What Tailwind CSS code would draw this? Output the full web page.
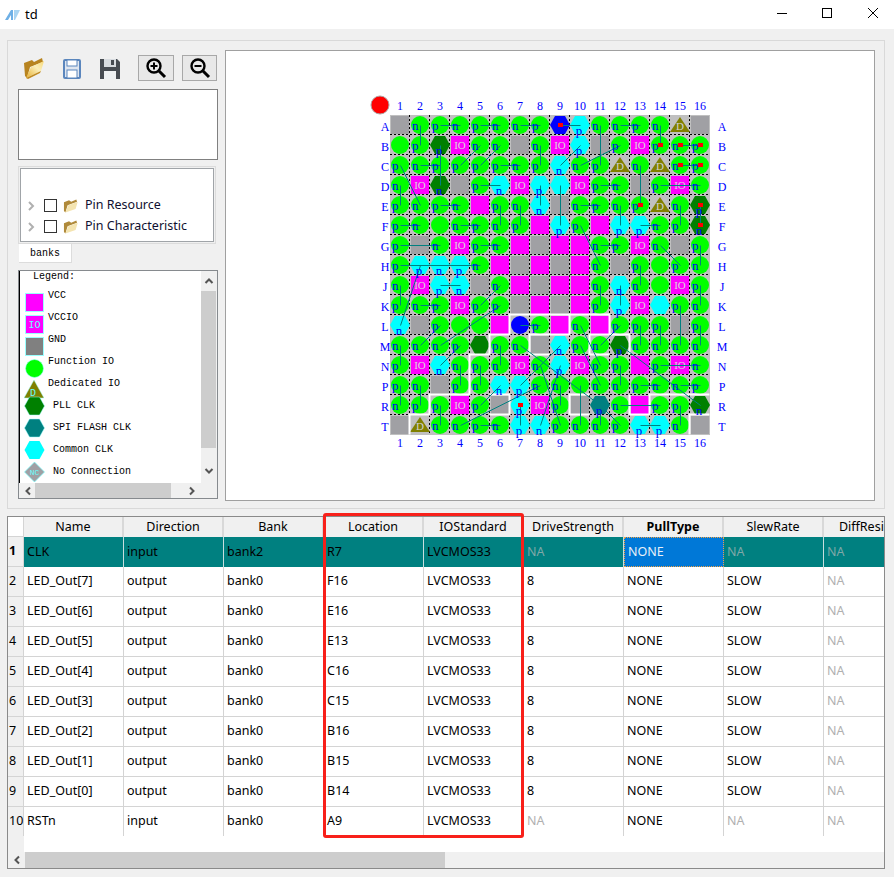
<!DOCTYPE html>
<html><head><meta charset="utf-8">
<title>td</title>
<script src="https://cdn.jsdelivr.net/npm/@tailwindcss/browser@4"></script>
</head>
<body class="bg-[#f0f0f0] font-['Noto_Sans',sans-serif] text-black overflow-hidden">
<div class="relative w-[894px] h-[877px] flex flex-col">

  <!-- title bar -->
  <div class="h-[29px] bg-white flex items-center shrink-0">
    <svg class="ml-[4px]" width="17" height="10" viewBox="0 0 17 10"><path d="M1 10 L7 0 L9 0 L9 10 L7 10 L7 5 L4 10Z" fill="#6fb0e6"/><path d="M10 0 L16 0 L11 10 L10 10Z" fill="#a9d4f2"/></svg>
    <span class="ml-[4px] text-[13px] leading-none">td</span>
    <div class="ml-auto flex items-center">
      <svg width="46" height="29"><path d="M21 13.500 H31" stroke="#000" stroke-width="1"/></svg>
      <svg width="46" height="29"><rect x="20.500" y="8.500" width="9" height="9" fill="none" stroke="#000"/></svg>
      <svg width="46" height="29"><path d="M20 8 L30 18 M30 8 L20 18" stroke="#000"/></svg>
    </div>
  </div>

  <!-- top group -->
  <div class="mt-[11px] mx-[7px] h-[469px] w-[878px] border border-[#d9d9d9] flex shrink-0">
    <div class="w-[217px] shrink-0 pl-[10px] flex flex-col">
      <!-- toolbar -->
      <div class="h-[48px] flex items-end pb-[8px]">
        <svg class="ml-[5px] mb-[2px]" width="22" height="22" viewBox="0 0 22 22">
          <defs><linearGradient id="fold" x1="0" y1="1" x2="1" y2="0"><stop offset="0" stop-color="#e8b030"/><stop offset=".6" stop-color="#fbeeb8"/><stop offset="1" stop-color="#f6d878"/></linearGradient></defs>
          <path d="M1 6 L9 3 L11 5 L19 1 L20 5 L7 10 L4 21 L2 19Z" fill="#b88420"/><path d="M3 21 L8 10 L21 4 L18 14 Z" fill="url(#fold)"/><path d="M3 21 L18 14 L17 16 L5 22Z" fill="#c08a20"/>
        </svg>
        <svg class="ml-[18px] mb-[2px]" width="18" height="20" viewBox="0 0 18 20"><rect x="1" y="1" width="16" height="18" rx="1" fill="#dfe6f0" stroke="#5b86bd" stroke-width="2"/><rect x="4" y="1" width="10" height="6" fill="#fff" stroke="#5b86bd"/><rect x="4" y="11" width="10" height="8" fill="#fff" stroke="#5b86bd"/></svg>
        <svg class="ml-[19px] mb-[2px]" width="21" height="21" viewBox="0 0 21 21"><path d="M0 1 H17 L20 4 V21 H0Z" fill="#474c52"/><rect x="4" y="1" width="12" height="8" fill="#d8dce0"/><rect x="11" y="2" width="3" height="5" fill="#474c52"/><rect x="4" y="13" width="12" height="8" fill="#eef0f2"/></svg>
        <div class="ml-[17px] w-[36px] h-[26px] bg-[#e8e8e8] border border-[#a8a8a8] flex items-center justify-center">
          <svg width="22" height="22" viewBox="0 0 22 22" fill="none" stroke="#000" stroke-width="2.400"><circle cx="9" cy="9" r="6.500"/><path d="M14 14 L20 20" stroke-width="3"/><path d="M5.500 9 H12.500 M9 5.500 V12.500" stroke-width="2"/></svg>
        </div>
        <div class="ml-[8px] w-[35px] h-[26px] bg-[#e8e8e8] border border-[#a8a8a8] flex items-center justify-center">
          <svg width="22" height="22" viewBox="0 0 22 22" fill="none" stroke="#000" stroke-width="2.400"><circle cx="9" cy="9" r="6.500"/><path d="M14 14 L20 20" stroke-width="3"/><path d="M5.500 9 H12.500" stroke-width="2"/></svg>
        </div>
      </div>
      <!-- empty box -->
      <div class="w-[200px] h-[71px] bg-white border border-[#808080] shrink-0"></div>
      <!-- tree -->
      <div class="mt-[6px] w-[198px] h-[78px] border border-[#dcdcdc] p-px shrink-0">
        <div class="h-full border border-[#a0a4a8] bg-white pt-[26px] text-[12.5px] text-[#101030]">
          <div class="h-[21px] flex items-center">
            <svg class="ml-[6px]" width="8" height="10" viewBox="0 0 8 10" fill="none" stroke="#b0b0b0" stroke-width="2"><path d="M2 1 L6 5 L2 9"/></svg>
            <span class="ml-[9px] w-[13px] h-[13px] border border-[#333] bg-white"></span>
            <svg class="ml-[5px]" width="17" height="16" viewBox="0 0 22 22"><path d="M2 6 L9 3 L12 5 L19 2 L20 5 L7 10 L4 20 L2 18Z" fill="#b08a3a"/><path d="M4 20 L8 10 L21 5 L18 15Z" fill="#f4e4b0"/></svg>
            <span class="ml-[6px]">Pin Resource</span>
          </div>
          <div class="h-[21px] flex items-center">
            <svg class="ml-[6px]" width="8" height="10" viewBox="0 0 8 10" fill="none" stroke="#b0b0b0" stroke-width="2"><path d="M2 1 L6 5 L2 9"/></svg>
            <span class="ml-[9px] w-[13px] h-[13px] border border-[#333] bg-white"></span>
            <svg class="ml-[5px]" width="17" height="16" viewBox="0 0 22 22"><path d="M2 6 L9 3 L12 5 L19 2 L20 5 L7 10 L4 20 L2 18Z" fill="#b08a3a"/><path d="M4 20 L8 10 L21 5 L18 15Z" fill="#f4e4b0"/></svg>
            <span class="ml-[6px]">Pin Characteristic</span>
          </div>
        </div>
      </div>
      <!-- tab -->
      <div class="ml-px w-[53px] h-[19px] bg-white border-b border-r border-[#dcdcdc] font-['Liberation_Mono',monospace] text-[10px] flex items-center justify-center shrink-0">banks</div>
      <!-- legend -->
      <div class="mt-[7px] w-[200px] h-[229px] border border-[#868a8e] bg-[#f0f0f0] flex flex-col shrink-0">
        <div class="flex h-[213px]">
          <div class="w-[182px] bg-white border-l border-black font-['Liberation_Mono',monospace] text-[10px] leading-[12px] overflow-hidden pl-[4px]">
            <div class="h-[19px] pl-[9px]">Legend:</div>
            <div class="h-[22px] flex items-start"><svg width="20" height="22" viewBox="0 0 20 22" class="mt-[1px]"><rect x="1.500" y="2.500" width="18" height="18" fill="#f0f" stroke="#9ff"/></svg><span class="ml-[4px]">VCC</span></div>
            <div class="h-[22px] flex items-start"><svg width="20" height="22" viewBox="0 0 20 22" class="mt-[1px]"><rect x="1.500" y="2.500" width="18" height="18" fill="#f0f" stroke="#9ff"/><text x="10.500" y="15" fill="#6ff" font-size="10" text-anchor="middle" font-family="Liberation Mono">IO</text></svg><span class="ml-[4px]">VCCIO</span></div>
            <div class="h-[22px] flex items-start"><svg width="20" height="22" viewBox="0 0 20 22" class="mt-[1px]"><rect x="1.500" y="2.500" width="18" height="18" fill="#808080" stroke="#9ff"/></svg><span class="ml-[4px]">GND</span></div>
            <div class="h-[22px] flex items-start"><svg width="20" height="22" viewBox="0 0 20 22" class="mt-[1px]"><circle cx="10.500" cy="11.500" r="9" fill="#0f0" stroke="#9ff" stroke-width=".6"/></svg><span class="ml-[4px]">Function IO</span></div>
            <div class="h-[17px] flex items-start"><svg width="20" height="22" viewBox="0 0 20 22" class="mt-[-1px] shrink-0"><path d="M10 3 L20 21 H0Z" fill="#808000" stroke="#9ff" stroke-width=".5"/><text x="9" y="19" fill="#6ff" font-size="10" text-anchor="middle" font-family="Liberation Mono">D</text></svg><span class="ml-[4px]">Dedicated IO</span></div>
            <div class="h-[22px] flex items-center"><svg width="21" height="20" viewBox="0 0 21 20"><path d="M0.500 10 L5.500 1 H15.500 L20.500 10 L15.500 19 H5.500Z" fill="#008000" stroke="#9ff" stroke-width=".5"/></svg><span class="ml-[8px]">PLL CLK</span></div>
            <div class="h-[22px] flex items-center"><svg width="21" height="20" viewBox="0 0 21 20"><path d="M0.500 10 L5.500 1 H15.500 L20.500 10 L15.500 19 H5.500Z" fill="#008080" stroke="#9ff" stroke-width=".5"/></svg><span class="ml-[8px]">SPI FLASH CLK</span></div>
            <div class="h-[22px] flex items-center"><svg width="21" height="20" viewBox="0 0 21 20"><path d="M0.500 10 L5.500 1 H15.500 L20.500 10 L15.500 19 H5.500Z" fill="#0ff"/></svg><span class="ml-[8px]">Common CLK</span></div>
            <div class="h-[22px] flex items-center"><svg width="21" height="22" viewBox="0 0 21 22"><path d="M10.500 1 L20.500 11 L10.500 21 L0.500 11Z" fill="#a0a0a4" stroke="#7ff" stroke-width=".7"/><text x="10.500" y="14" fill="#6ff" font-size="8" text-anchor="middle" font-family="Liberation Mono">NC</text></svg><span class="ml-[8px]">No Connection</span></div>
          </div>
          <!-- vertical scrollbar -->
          <div class="w-[16px] flex flex-col items-start">
            <svg class="mt-[6px] ml-[3px]" width="10" height="8" viewBox="0 0 10 8" fill="none" stroke="#555" stroke-width="2"><path d="M1.500 6 L5 2.500 L8.500 6"/></svg>
            <div class="mt-[6px] w-[15px] h-[157px] bg-[#cdcdcd]"></div>
            <svg class="mt-[19px] ml-[3px]" width="10" height="8" viewBox="0 0 10 8" fill="none" stroke="#555" stroke-width="2"><path d="M1.500 2 L5 5.500 L8.500 2"/></svg>
          </div>
        </div>
        <!-- horizontal scrollbar -->
        <div class="h-[15px] flex items-center">
          <svg class="ml-[5px]" width="8" height="10" viewBox="0 0 8 10" fill="none" stroke="#555" stroke-width="2"><path d="M6 1.500 L2.500 5 L6 8.500"/></svg>
          <div class="ml-[3px] w-[136px] h-[15px] bg-[#cdcdcd]"></div>
          <svg class="ml-[17px]" width="8" height="10" viewBox="0 0 8 10" fill="none" stroke="#555" stroke-width="2"><path d="M2 1.500 L5.500 5 L2 8.500"/></svg>
        </div>
      </div>
    </div>

    <!-- package view -->
    <div class="mt-[9px] w-[650px] h-[451px] bg-white border border-[#a0a0a0] shrink-0">
      <svg id="chip" width="648" height="449"></svg>
    </div>
  </div>

  <!-- pin table -->
  <div class="mt-[7px] mx-[7px] w-[878px] h-[353px] border border-[#8a8a8a] bg-white flex flex-col overflow-hidden shrink-0">
    <div id="pinTable" class="h-[319px] overflow-hidden text-[12.5px]"></div>
    <div class="w-[16px] h-[16px] bg-[#f0f0f0]"></div>
    <div class="h-[16px] bg-[#f0f0f0] flex items-center">
      <svg class="ml-[5px]" width="8" height="10" viewBox="0 0 8 10" fill="none" stroke="#555" stroke-width="2"><path d="M6 1.500 L2.500 5 L6 8.500"/></svg>
      <div class="ml-[4px] w-[420px] h-[16px] bg-[#cdcdcd]"></div>
    </div>
  </div>

  <!-- red highlight drawn over the table -->
  <div class="absolute left-[323px] top-[513px] w-[201px] h-[325px] border-[3px] border-[#f8201a] rounded-[3px]"></div>
</div>

<script>
  // pin table
  const headers = ['Name', 'Direction', 'Bank', 'Location', 'IOStandard', 'DriveStrength', 'PullType', 'SlewRate', 'DiffResistor'];
  const pins = [
    ['CLK', 'input', 'bank2', 'R7', 'NA'],
    ['LED_Out[7]', 'output', 'bank0', 'F16', '8'],
    ['LED_Out[6]', 'output', 'bank0', 'E16', '8'],
    ['LED_Out[5]', 'output', 'bank0', 'E13', '8'],
    ['LED_Out[4]', 'output', 'bank0', 'C16', '8'],
    ['LED_Out[3]', 'output', 'bank0', 'C15', '8'],
    ['LED_Out[2]', 'output', 'bank0', 'B16', '8'],
    ['LED_Out[1]', 'output', 'bank0', 'B15', '8'],
    ['LED_Out[0]', 'output', 'bank0', 'B14', '8'],
    ['RSTn', 'input', 'bank0', 'A9', 'NA'],
  ];
  let html = '<div class="flex h-[20px] bg-[#f0f0f0]"><div class="w-[16px] shrink-0 border-r border-b border-[#d4d4d4] bg-white"></div>';
  headers.forEach((h) => {
    const bold = h === 'PullType' ? ' font-bold' : '';
    html += `<div class="w-[100px] shrink-0 border-r-2 border-[#d8d8d8] flex items-center justify-center whitespace-nowrap overflow-hidden${bold}">${h}</div>`;
  });
  html += '</div>';
  pins.forEach((p, i) => {
    const sel = i === 0;
    const rowCls = sel ? 'bg-[#008080]' : 'bg-white';
    const line = sel ? 'border-r border-[#c8dede]' : 'border-r border-b border-[#d4d4d4]';
    const cells = [p[0], p[1], p[2], p[3], 'LVCMOS33', p[4], 'NONE', p[4] === 'NA' ? 'NA' : 'SLOW', 'NA'];
    html += `<div class="flex h-[30px] ${rowCls}">`;
    html += `<div class="w-[16px] shrink-0 bg-[#f0f0f0] border-r border-b border-[#d4d4d4] flex items-center pl-[1px] ${sel ? 'font-bold' : ''}">${i + 1}</div>`;
    cells.forEach((c, j) => {
      let cls = `w-[100px] shrink-0 flex items-center pl-[3px] ${line}`;
      if (c === 'NA') cls += sel ? ' text-[#7fa8a8]' : ' text-[#b0b0b0]';
      if (sel && j === 6) cls = 'w-[100px] shrink-0 flex items-center pl-[3px] bg-[#0078d7] text-[#e8f0f8] border border-dotted border-[#f0a040]';
      html += `<div class="${cls}">${c}</div>`;
    });
    html += '</div>';
  });
  document.getElementById('pinTable').innerHTML = html;

  // package view, page coords minus the svg origin
  const OX = -226, OY = -51;
  const rowNames = 'ABCDEFGHJKLMNPRT'.split('');
  const grid = [
    'G fn fp fn fp fn fn fp bo* cp fn fn fp fn D G',
    'fo fp hp I fn fn G fn I cp G fp I fp* fn* fp*',
    'fp fn fp fp fp fp fn fp cn fn fp D fn D fn* fp*',
    'fn I hn G fp cn I cp co I fp fn G fp I fn',
    'fp fn fp fn V fp fn cn G fn fp fn fp* D fn hp*',
    'fp fn fo fn fp fn fp V cp fp V cp cp fn fp hn*',
    'fp G fn I fp fn V G V V fn fp I fn G fp',
    'fp cp cn cp fn V G V G V fn G fp fo fp fn',
    'fn I cp cn G fn V G V V fn cn fn fo I fp',
    'fp fn fp I fp fp G V G V fp cp I co fp fn',
    'cn G fp fo fo V Bo fp V fn V fp fp fp G fp',
    'fn fn fn fp ho fp fn G cn fp fn hp fn fn fn fn',
    'fp I cn fn fp fn I fn cp I fp fp V fp I fn',
    'fp fn G fp fn cn cp fn fn fo fn fn fp fn fn fp',
    'fn fp fp I fp G cp* I fp G tp fn V fp fp hn',
    'G D fn fn fp fn cp cn fp fn fn fp cp cp fn G',
  ];
  const pairs = 'A2-B2 A3-A4 A5-A6 A7-A8 A9-A10 A11-C11 A12-A13 A14-B14 B3-D3 B5-C4 B6-C5 B8-C8 B10-C9 B12-C10 B15-B16 C1-E2 C2-C3 C6-C7 C13-E13 C15-C16 D1-E1 D5-D6 D8-E8 D9-F9 D11-D12 D14-D16 E3-E4 E6-F6 E7-F7 E10-E11 E12-F12 E15-F15 E16-F16 F1-F2 F4-F5 F10-H11 F13-F14 G1-G3 G5-G6 G11-G12 G14-H15 G16-H16 H1-H5 H2-L1 H13-J13 J1-K1 J3-J4 J6-K5 J11-K11 J12-K12 J16-K16 K2-K3 K6-M3 K15-M15 L3-M2 L10-N11 L12-M11 L13-M13 L14-M14 L16-M16 L7-L8 M1-N1 M4-N3 M6-N6 M7-R11 M9-P7 M10-P11 M12-R16 N4-P4 N5-P5 N8-T9 N9-T8 N12-P12 N14-N16 P1-R1 P2-R2 P6-R5 P8-T4 P9-R9 P10-T10 P13-P14 P15-P16 R3-T3 R7-T7 R11-T11 R11-T12 R12-R14 R15-T15 T5-T6 T13-T14'.split(' ');
  // white outlines, in cell-edge coordinates
  const whiteRuns = [
    [[1,16],[1,15],[2,15],[2,14],[4,14],[4,12],[5,12],[5,11],[6,11],[6,10],[11,10],[11,11],[12,11],[12,12]],
    [[7,12],[7,11],[9,11],[9,10]],
    [[7,12],[8,12]],
    [[10,11],[11,11]],
    [[10,11],[10,12],[11,12]],
    [[5,14],[6,14],[6,15],[5,15]],
    [[10,14],[9,14],[9,15],[10,15]],
    [[12,14],[12,15],[13,15],[13,14],[16,14]],
    [[15,16],[15,15],[16,15]],
  ];
  const cx = (c) => 400 + c * 20 + OX;
  const cy = (r) => 125 + r * 20 + OY;
  const blue = '#0000ff';
  let s = '';
  const label = (x, y, t, fill, size, anchor) =>
    `<text x="${x}" y="${y}" fill="${fill}" font-size="${size}" font-family="Liberation Serif" text-anchor="${anchor || 'middle'}">${t}</text>`;

  s += `<circle cx="${380 + OX}" cy="${105 + OY}" r="9" fill="#ff0000" stroke="#b0a0a0"/>`;
  s += `<rect x="${390 + OX}" y="${115 + OY}" width="320" height="320" fill="#c0c0c0"/>`;
  for (let i = 1; i < 16; i++) {
    s += `<path d="M${390 + OX} ${115 + i * 20 + OY - 0.5} h320 M${390 + i * 20 + OX - 0.5} ${115 + OY} v320" stroke="#000" stroke-width="1" stroke-dasharray="2 2" fill="none"/>`;
  }
  for (let c = 0; c < 16; c++) {
    s += label(cx(c), 110 + OY, c + 1, blue, 12);
    s += label(cx(c), 447 + OY, c + 1, blue, 12);
  }
  rowNames.forEach((n, r) => {
    s += label(385 + OX, cy(r) + 6, n, blue, 12);
    s += label(722 + OX, cy(r) + 6, n, blue, 12);
  });
  const hex = (x, y, fill) => `<path d="M${x - 10} ${y} L${x - 5} ${y - 9} H${x + 5} L${x + 10} ${y} L${x + 5} ${y + 9} H${x - 5}Z" fill="${fill}"/>`;
  const hexFill = { c: '#00ffff', h: '#008000', t: '#008080', b: '#0000ff' };
  let labels = '';
  grid.forEach((row, r) => {
    row.split(' ').forEach((tok, c) => {
      const x = cx(c), y = cy(r), k = tok[0], t = tok[1];
      if (k === 'G' || k === 'V' || k === 'I') {
        s += `<rect x="${x - 9}" y="${y - 9}" width="18" height="18" fill="${k === 'G' ? '#a0a0a4' : '#ff00ff'}"/>`;
        if (k === 'I') s += label(x, y + 4, 'IO', '#d8d8d8', 11);
      } else if (k === 'f' || k === 'B') {
        s += `<circle cx="${x}" cy="${y}" r="9" fill="${k === 'f' ? '#00ff00' : '#0000ff'}"/>`;
        if (t !== 'o') labels += label(x - 8, y + 5, t, blue, 13, 'start');
      } else if (k === 'D') {
        s += `<path d="M${x} ${y - 8} L${x + 10} ${y + 7} H${x - 10}Z" fill="#808000"/>` + label(x, y + 5, 'D', '#d0d0d0', 11);
      } else {
        s += hex(x, y, hexFill[k]);
        if (t !== 'o') labels += label(x - 1, y + 10, t, blue, 13);
      }
    });
  });
  whiteRuns.forEach((run) => {
    const d = run.map((p, i) => `${i ? 'L' : 'M'}${390 + p[0] * 20 + OX - 0.5} ${115 + p[1] * 20 + OY - 0.5}`).join(' ');
    s += `<path d="${d}" stroke="#fff" stroke-width="2" fill="none"/>`;
  });
  const pos = (name) => [cx(parseInt(name.slice(1)) - 1), cy(rowNames.indexOf(name[0]))];
  pairs.forEach((p) => {
    const [a, b] = p.split('-').map(pos);
    s += `<line x1="${a[0] + 0.5}" y1="${a[1] + 0.5}" x2="${b[0] + 0.5}" y2="${b[1] + 0.5}" stroke="#008080" stroke-width="1"/>`;
  });
  s += labels;
  grid.forEach((row, r) => {
    row.split(' ').forEach((tok, c) => {
      if (tok.endsWith('*')) s += `<rect x="${cx(c) - 2}" y="${cy(r) - 2}" width="5" height="4" fill="#ff0000"/>`;
    });
  });
  document.getElementById('chip').innerHTML = s;
</script>
</body></html>
